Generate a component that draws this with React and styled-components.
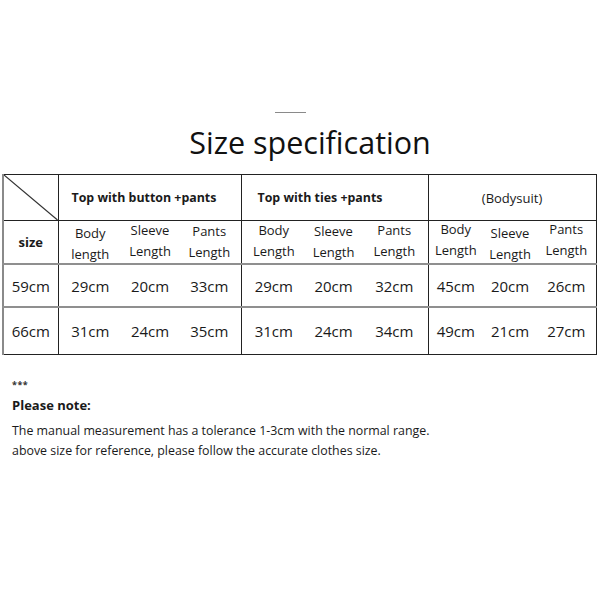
import React from "react";
import styled, { createGlobalStyle } from "styled-components";

const Global = createGlobalStyle`
  html, body { margin: 0; padding: 0; background: #fff; }
  body { font-family: "Open Sans", "Noto Sans", sans-serif; color: #1a1a1a; }
`;

const Page = styled.div`
  width: 600px;
  height: 600px;
  box-sizing: border-box;
  padding-top: 112px;
  display: flex;
  flex-direction: column;
`;

const Heading = styled.header`
  display: flex;
  flex-direction: column;
  align-items: center;
`;

const Rule = styled.div`
  width: 31px;
  height: 1px;
  background: #8a8a8a;
  margin-right: 19px;
`;

const Title = styled.h1`
  margin: 14px 0 0 20px;
  font-size: 30.5px;
  line-height: 31px;
  font-weight: 400;
  color: #111;
`;

const Table = styled.table`
  margin: 16px 0 0 2px;
  width: 593px;
  table-layout: fixed;
  border-collapse: collapse;
  border-top: 1px solid #222;
  border-right: 1px solid #222;
  border-bottom: 1px solid #222;
  border-left: 2px solid #8a8a8a;
`;

const Row = styled.tr`
  height: ${(p) => p.$h}px;
  border-bottom: ${(p) => (p.$soft ? "2px solid #8f8f8f" : "1px solid #222")};
  &:last-child { border-bottom: 1px solid #222; }
`;

const Cell = styled.td`
  padding: 0;
  text-align: ${(p) => p.$align || "center"};
  padding-left: ${(p) => p.$pl || 0}px;
  vertical-align: middle;
  border-right: ${(p) => (p.$edge ? "1px solid #222" : "none")};
  font-size: ${(p) => p.$size || 15}px;
  font-weight: ${(p) => (p.$bold ? 700 : 400)};
  line-height: 20px;
  white-space: nowrap;
  position: relative;
  color: #1a1a1a;
`;

const Label = styled.span`
  display: block;
  font-size: 13px;
  line-height: 21px;
  transform: translateY(${(p) => p.$dy || 0}px);
`;

const Diagonal = styled.svg`
  position: absolute;
  inset: 0;
  width: 100%;
  height: 100%;
`;

const Notes = styled.section`
  padding: 23px 0 0 12px;
  font-size: 12.4px;
  line-height: 20px;
  color: #1a1a1a;
`;

const Stars = styled.div`
  font-size: 9px;
  line-height: 14px;
  font-weight: 700;
  letter-spacing: 0.5px;
  color: #333;
`;

const NoteTitle = styled.div`
  margin: 3px 0 6px;
  font-weight: 700;
  font-size: 13px;
`;

const widths = [55, 64, 56, 63, 65, 55, 67, 55, 54, 59];

const sub = [
  [["Body", "length"], 2],
  [["Sleeve", "Length"], -1.5],
  [["Pants", "Length"], 0],
  [["Body", "Length"], -1],
  [["Sleeve", "Length"], 0],
  [["Pants", "Length"], -1],
  [["Body", "Length"], -2],
  [["Sleeve", "Length"], 1.5],
  [["Pants", "Length"], -2],
];

const rows = [
  ["59cm", "29cm", "20cm", "33cm", "29cm", "20cm", "32cm", "45cm", "20cm", "26cm"],
  ["66cm", "31cm", "24cm", "35cm", "31cm", "24cm", "34cm", "49cm", "21cm", "27cm"],
];

const edgeAt = (i) => i === 0 || i === 3 || i === 6;

export default function App() {
  return (
    <>
      <Global />
      <Page>
        <Heading>
          <Rule />
          <Title>Size specification</Title>
        </Heading>
        <Table>
          <colgroup>
            {widths.map((w, i) => (
              <col key={i} style={{ width: w }} />
            ))}
          </colgroup>
          <tbody>
            <Row $h={46}>
              <Cell $edge>
                <Diagonal viewBox="0 0 100 100" preserveAspectRatio="none">
                  <line x1="0" y1="0" x2="100" y2="100" stroke="#333" strokeWidth="1.2" vectorEffect="non-scaling-stroke" />
                </Diagonal>
              </Cell>
              <Cell colSpan={3} $edge $bold $size={12.4} $align="left" $pl={13}>
                Top with button +pants
              </Cell>
              <Cell colSpan={3} $edge $bold $size={12.4} $align="left" $pl={16}>
                Top with ties +pants
              </Cell>
              <Cell colSpan={3} $size={13}>
                (Bodysuit)
              </Cell>
            </Row>
            <Row $h={40} $soft>
              <Cell $edge $bold $size={13}>
                size
              </Cell>
              {sub.map(([[a, b], dy], i) => (
                <Cell key={i} $edge={i === 2 || i === 5}>
                  <Label $dy={dy}>{a}</Label>
                  <Label $dy={dy}>{b}</Label>
                </Cell>
              ))}
            </Row>
            {rows.map((r, ri) => (
              <Row key={ri} $h={ri === 0 ? 43 : 47} $soft={ri === 0}>
                {r.map((v, i) => (
                  <Cell key={i} $edge={edgeAt(i)}>
                    {v}
                  </Cell>
                ))}
              </Row>
            ))}
          </tbody>
        </Table>
        <Notes>
          <Stars>***</Stars>
          <NoteTitle>Please note:</NoteTitle>
          <div>The manual measurement has a tolerance 1-3cm with the normal range.</div>
          <div>above size for reference, please follow the accurate clothes size.</div>
        </Notes>
      </Page>
    </>
  );
}
